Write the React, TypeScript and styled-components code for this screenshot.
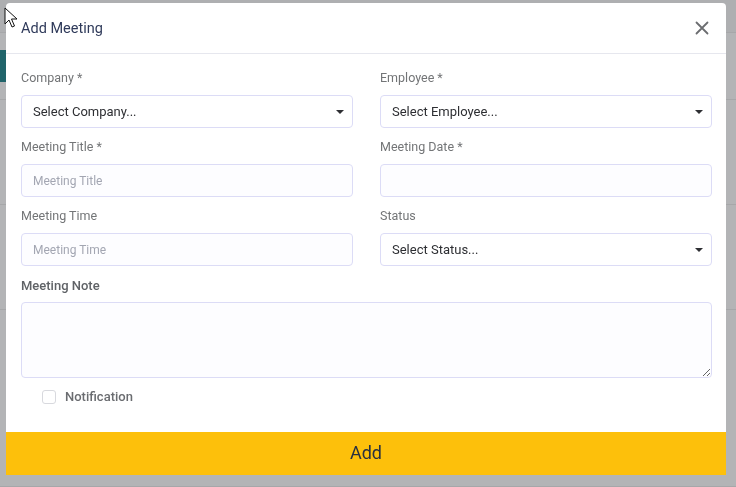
import React from "react";
import styled, { createGlobalStyle } from "styled-components";

const Global = createGlobalStyle`
  html, body { margin: 0; padding: 0; }
  body {
    width: 736px; height: 487px; overflow: hidden;
    font-family: Roboto, "Noto Sans", "Liberation Sans", sans-serif;
    background: #ffffff;
  }
  * { box-sizing: border-box; }
`;

const Page = styled.div`
  width: 736px;
  height: 487px;
  display: flex;
  flex-direction: column;
  background: #ffffff;
`;

const PageStrip = styled.div<{ $h: number; $c: string }>`
  height: ${(p) => p.$h}px;
  border-bottom: 1px solid #ececec;
  display: flex;
  align-items: center;
  background: ${(p) => p.$c};
`;

const Tag = styled.div<{ $c: string; $w: number; $h: number }>`
  width: ${(p) => p.$w}px;
  height: ${(p) => p.$h}px;
  background: ${(p) => p.$c};
`;

const Overlay = styled.div`
  position: fixed;
  inset: 0;
  background: rgba(10, 12, 18, 0.31);
  padding: 3px 10px 12px 6px;
  display: flex;
  align-items: flex-start;
`;

const Modal = styled.div`
  width: 720px;
  height: 472px;
  background: #ffffff;
  border-radius: 4px 4px 0 0;
  display: flex;
  flex-direction: column;
  overflow: hidden;
`;

const Header = styled.div`
  height: 51px;
  border-bottom: 1px solid #e6e7ee;
  display: flex;
  align-items: center;
  justify-content: space-between;
  padding: 0 15px 0 15px;
`;

const Title = styled.h5`
  margin: 0;
  font-size: 14.5px;
  font-weight: 400;
  color: #2f3a5a;
  padding-top: 1px;
`;

const CloseBtn = styled.button`
  border: none;
  background: none;
  padding: 0;
  width: 18px;
  height: 18px;
  display: flex;
  align-items: center;
  justify-content: center;
  cursor: pointer;
`;

const Body = styled.div`
  flex: 1;
  padding: 15px 14px 0 15px;
  display: flex;
  flex-direction: column;
`;

const Grid = styled.div`
  display: grid;
  grid-template-columns: 1fr 1fr;
  column-gap: 27px;
`;

const Group = styled.div<{ $mb?: number }>`
  display: flex;
  flex-direction: column;
  margin-bottom: ${(p) => p.$mb ?? 10}px;
`;

const Label = styled.label<{ $bold?: boolean }>`
  font-size: ${(p) => (p.$bold ? 13 : 12.5)}px;
  line-height: 18px;
  color: ${(p) => (p.$bold ? "#5f6266" : "#737577")};
  font-weight: ${(p) => (p.$bold ? 500 : 400)};
  margin-bottom: ${(p) => (p.$bold ? 7 : 8)}px;
`;

const SelectBox = styled.div`
  height: 33px;
  border: 1px solid #dcdcf6;
  border-radius: 4px;
  background: #ffffff;
  display: flex;
  align-items: center;
  justify-content: space-between;
  padding: 0 8px 0 11px;
  font-size: 13px;
  color: #2e2f33;
`;

const Caret = styled.span`
  width: 0;
  height: 0;
  border-left: 4px solid transparent;
  border-right: 4px solid transparent;
  border-top: 4px solid #2e2f33;
`;

const Input = styled.input`
  height: 33px;
  border: 1px solid #dcdcf6;
  border-radius: 4px;
  background: #fdfdff;
  padding: 0 11px;
  font-family: inherit;
  font-size: 12px;
  color: #333;
  outline: none;
  &::placeholder { color: #a3a6b2; }
`;

const TextArea = styled.textarea`
  height: 76px;
  border: 1px solid #dcdcf6;
  border-radius: 4px;
  background: #fdfdff;
  padding: 8px 11px;
  font-family: inherit;
  font-size: 12.5px;
  resize: vertical;
  outline: none;
`;

const CheckRow = styled.label`
  display: flex;
  align-items: center;
  gap: 9px;
  padding-left: 21px;
  margin-top: 2px;
  font-size: 13px;
  font-weight: 500;
  color: #6a6c70;
`;

const Box = styled.span`
  width: 14px;
  height: 14px;
  border: 1px solid #d8d9de;
  border-radius: 3px;
  background: #fff;
`;

const AddButton = styled.button`
  height: 43px;
  border: none;
  background: #fdc00b;
  color: #283040;
  font-family: inherit;
  font-size: 18px;
  font-weight: 400;
  width: 100%;
  padding: 0 0 3px 0;
  cursor: pointer;
`;

const Cursor = styled.svg`
  position: fixed;
  left: 4px;
  top: 7px;
`;

const Select = ({ text }: { text: string }) => (
  <SelectBox>
    <span>{text}</span>
    <Caret />
  </SelectBox>
);

export default function App() {
  return (
    <>
      <Global />
      <Page>
        <PageStrip $h={33} $c="#f8f8f8" />
        <PageStrip $h={67} $c="#ffffff">
          <Tag $c="#2a8c91" $w={12} $h={32} />
        </PageStrip>
        <PageStrip $h={105} $c="#ffffff" />
        <PageStrip $h={105} $c="#ffffff" />
        <PageStrip $h={177} $c="#ffffff" />
      </Page>
      <Overlay>
        <Modal>
          <Header>
            <Title>Add Meeting</Title>
            <CloseBtn aria-label="Close">
              <svg width="14" height="14" viewBox="0 0 14 14">
                <path d="M1.5 1.5 L12.5 12.5 M12.5 1.5 L1.5 12.5" stroke="#6b6d70" strokeWidth="1.8" strokeLinecap="round" />
              </svg>
            </CloseBtn>
          </Header>
          <Body>
            <Grid>
              <Group>
                <Label>Company *</Label>
                <Select text="Select Company..." />
              </Group>
              <Group>
                <Label>Employee *</Label>
                <Select text="Select Employee..." />
              </Group>
              <Group>
                <Label>Meeting Title *</Label>
                <Input placeholder="Meeting Title" />
              </Group>
              <Group>
                <Label>Meeting Date *</Label>
                <Input />
              </Group>
              <Group $mb={11}>
                <Label>Meeting Time</Label>
                <Input placeholder="Meeting Time" />
              </Group>
              <Group $mb={11}>
                <Label>Status</Label>
                <Select text="Select Status..." />
              </Group>
            </Grid>
            <Group $mb={9}>
              <Label $bold>Meeting Note</Label>
              <TextArea />
            </Group>
            <CheckRow>
              <Box />
              Notification
            </CheckRow>
          </Body>
          <AddButton>Add</AddButton>
        </Modal>
      </Overlay>
      <Cursor width="14" height="22" viewBox="0 0 14 22">
        <path d="M1 1 L1 17 L5 13 L8 20 L10.5 19 L7.5 12 L13 12 Z" fill="#fff" stroke="#111" strokeWidth="1" strokeLinejoin="round" />
      </Cursor>
    </>
  );
}
